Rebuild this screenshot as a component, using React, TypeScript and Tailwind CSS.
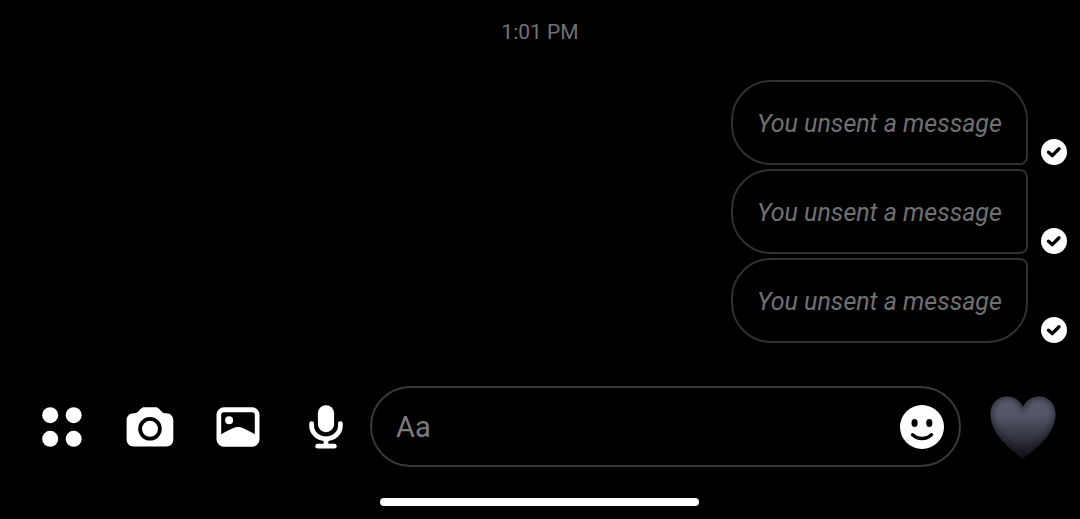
import clsx from "clsx";

type Message = {
  id: number;
  text: string;
  corners: string;
};

const messages: Message[] = [
  { id: 1, text: "You unsent a message", corners: "rounded-[40px] rounded-br-[8px]" },
  { id: 2, text: "You unsent a message", corners: "rounded-[40px] rounded-r-[8px]" },
  { id: 3, text: "You unsent a message", corners: "rounded-[40px] rounded-tr-[8px]" },
];

function SentIcon() {
  return (
    <svg width="26" height="26" viewBox="0 0 26 26" className="block shrink-0">
      <circle cx="13" cy="13" r="13" fill="#fff" />
      <path
        d="M7.5 13.2l3.8 3.4 6.7-6.8"
        fill="none"
        stroke="#000"
        strokeWidth="3.4"
        strokeLinecap="round"
        strokeLinejoin="round"
      />
    </svg>
  );
}

function AppsIcon() {
  return (
    <svg width="40" height="40" viewBox="0 0 40 40" fill="#fff">
      <circle cx="8.2" cy="8.2" r="8" />
      <circle cx="31.7" cy="8.2" r="8" />
      <circle cx="8.2" cy="31.8" r="8" />
      <circle cx="31.7" cy="31.8" r="8" />
    </svg>
  );
}

function CameraIcon() {
  return (
    <svg width="48" height="40" viewBox="0 0 48 40">
      <path
        d="M18.4.3h11c1.6 0 2.8.5 3.8 1.6l2.6 2.9c.8.9 1.8 1.4 3 1.4h1.4c4.2 0 7.1 2.8 7.1 7v19.4c0 4.2-2.9 7-7.1 7H7.7c-4.2 0-7.1-2.8-7.1-7V13.2c0-4.2 2.9-7 7.1-7H9c1.2 0 2.2-.5 3-1.4l2.6-2.9C15.6.8 16.8.3 18.4.3z"
        fill="#fff"
      />
      <circle cx="24" cy="21.8" r="9.9" fill="#fff" stroke="#000" strokeWidth="3.8" />
    </svg>
  );
}

function PhotoIcon() {
  return (
    <svg width="44" height="40" viewBox="0 0 44 40">
      <rect x="0.5" y="0.3" width="43" height="39.5" rx="7.5" fill="#fff" />
      <path
        d="M7.8 5.3h28.4a2.6 2.6 0 0 1 2.6 2.6v19.3c-4-2.3-8.1-4.1-11.6-5.9-3.5-1.7-6.9-1.7-10.4 0-3.5 1.8-7.6 3.6-11.6 5.9V7.9a2.6 2.6 0 0 1 2.6-2.6z"
        fill="#000"
      />
      <circle cx="13.1" cy="13.2" r="4" fill="#fff" />
    </svg>
  );
}

function MicIcon() {
  return (
    <svg width="34" height="44" viewBox="0 0 34 44">
      <rect x="8.9" y="0.2" width="16.2" height="27" rx="8" fill="#fff" />
      <g fill="none" stroke="#fff" strokeWidth="4.8" strokeLinecap="round">
        <path d="M2.6 18.6v1.7c0 8 6.3 13.5 14.4 13.5s14.4-5.5 14.4-13.5v-1.7" />
        <path d="M17 34v6" />
        <path d="M8.7 41.2h16.6" />
      </g>
    </svg>
  );
}

function SmileIcon() {
  return (
    <svg width="44" height="44" viewBox="0 0 44 44">
      <circle cx="22" cy="22" r="22" fill="#fff" />
      <ellipse cx="14.6" cy="18" rx="3.1" ry="4" fill="#000" />
      <ellipse cx="29.3" cy="18" rx="3.1" ry="4" fill="#000" />
      <path
        d="M12.6 29.7c5.3 5 13.6 5 18.8 0"
        fill="none"
        stroke="#000"
        strokeWidth="3.4"
        strokeLinecap="round"
      />
    </svg>
  );
}

const heartPath =
  "M33 11C29.5 4 23.5.5 17 .5 7.5.5.5 8 .5 18c0 17.500 15 32 32.500 44.500C50.500 50 65.500 35.500 65.500 18 65.500 8 58.500.5 49 .5 42.500.5 36.500 4 33 11z";

function HeartIcon() {
  return (
    <svg width="66" height="63" viewBox="0 0 66 63">
      <defs>
        <linearGradient id="heart-fill" x1="0" y1="0" x2="0" y2="1">
          <stop offset="0" stopColor="#585b6e" />
          <stop offset="0.3" stopColor="#545768" />
          <stop offset="0.6" stopColor="#393b47" />
          <stop offset="0.85" stopColor="#1e1f27" />
          <stop offset="1" stopColor="#0c0c12" />
        </linearGradient>
        <filter id="heart-soft" x="-20%" y="-20%" width="140%" height="140%">
          <feGaussianBlur stdDeviation="2.5" />
        </filter>
        <clipPath id="heart-clip">
          <path d={heartPath} />
        </clipPath>
      </defs>
      <path d={heartPath} fill="url(#heart-fill)" />
      <g clipPath="url(#heart-clip)">
        <path
          d={heartPath}
          fill="none"
          stroke="#17181f"
          strokeWidth="5"
          opacity="0.6"
          filter="url(#heart-soft)"
        />
      </g>
    </svg>
  );
}

export default function App() {
  return (
    <div className="flex h-[519px] w-[1080px] flex-col overflow-hidden bg-black font-['Roboto',sans-serif]">
      <div className="flex h-20 justify-center pt-4 text-[21px] leading-8 text-[#717171]">
        1:01 PM
      </div>

      <div className="flex flex-col gap-1 pr-[13px]">
        {messages.map((message) => (
          <div key={message.id} className="flex items-end justify-end gap-[13px]">
            <div
              className={clsx(
                "flex h-[85px] w-[297px] items-center border-2 border-[#303030] pt-0.5 pl-6 text-[25px] whitespace-nowrap text-[#717171] italic",
                message.corners
              )}
            >
              {message.text}
            </div>
            <SentIcon />
          </div>
        ))}
      </div>

      {/* Composer */}
      <div className="mt-[43px] flex h-[81px] items-center">
        <div className="flex w-[370px] items-center pl-[42px]">
          <button type="button" aria-label="More">
            <AppsIcon />
          </button>
          <button type="button" aria-label="Camera" className="ml-11">
            <CameraIcon />
          </button>
          <button type="button" aria-label="Gallery" className="ml-[42px]">
            <PhotoIcon />
          </button>
          <button type="button" aria-label="Voice" className="ml-[49px]">
            <MicIcon />
          </button>
        </div>
        <div className="flex h-[81px] w-[591px] items-center justify-between rounded-full border-2 border-[#383838] pr-[15.5px] pl-6">
          <span className="pt-0.5 text-[29px] text-[#7b7b7b]">Aa</span>
          <button type="button" aria-label="Emoji">
            <SmileIcon />
          </button>
        </div>
        <button type="button" aria-label="Send heart" className="mt-0.5 ml-[29px]">
          <HeartIcon />
        </button>
      </div>

      <div className="mt-[31px] ml-[380px] h-2 w-[319px] rounded-full bg-white" />
    </div>
  );
}
